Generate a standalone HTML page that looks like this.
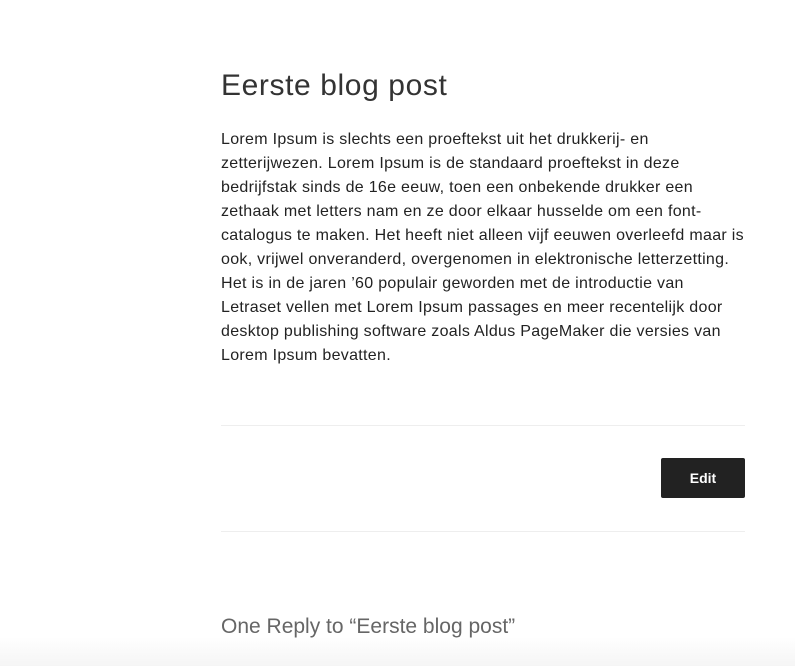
<!DOCTYPE html>
<html><head><meta charset="utf-8"><style>
body{margin:0;width:795px;height:666px;background:#fff;position:relative;overflow:hidden;font-family:"Liberation Sans",sans-serif;color:#222}
h1{position:absolute;left:221px;top:66px;margin:0;font-weight:400;font-size:30px;line-height:40px;color:#333;letter-spacing:0.6px}
p{position:absolute;left:221px;top:128px;width:570px;margin:0;font-size:16px;line-height:24px;color:#222;letter-spacing:0.3px;white-space:nowrap}
.hr{position:absolute;left:221px;width:524px;height:1px;background:#eee}
.btn{position:absolute;left:661px;top:458px;width:84px;height:40px;background:#222;border-radius:2px;color:#fff;font-weight:700;font-size:14px;text-align:center;line-height:40px}
h2{position:absolute;left:221px;top:613px;margin:0;font-weight:400;font-size:21px;line-height:28px;color:#666}
.fade{position:absolute;left:0;top:637px;width:795px;height:29px;background:linear-gradient(#fff,#f5f5f5)}
</style></head><body>
<h1>Eerste blog post</h1>
<p>Lorem Ipsum is slechts een proeftekst uit het drukkerij- en<br>zetterijwezen. Lorem Ipsum is de standaard proeftekst in deze<br>bedrijfstak sinds de 16e eeuw, toen een onbekende drukker een<br>zethaak met letters nam en ze door elkaar husselde om een font-<br>catalogus te maken. Het heeft niet alleen vijf eeuwen overleefd maar is<br>ook, vrijwel onveranderd, overgenomen in elektronische letterzetting.<br>Het is in de jaren ’60 populair geworden met de introductie van<br>Letraset vellen met Lorem Ipsum passages en meer recentelijk door<br>desktop publishing software zoals Aldus PageMaker die versies van<br>Lorem Ipsum bevatten.</p>
<div class="hr" style="top:425px"></div>
<div class="btn">Edit</div>
<div class="hr" style="top:531px"></div>
<div class="fade"></div>
<h2>One Reply to “Eerste blog post”</h2>
</body></html>
